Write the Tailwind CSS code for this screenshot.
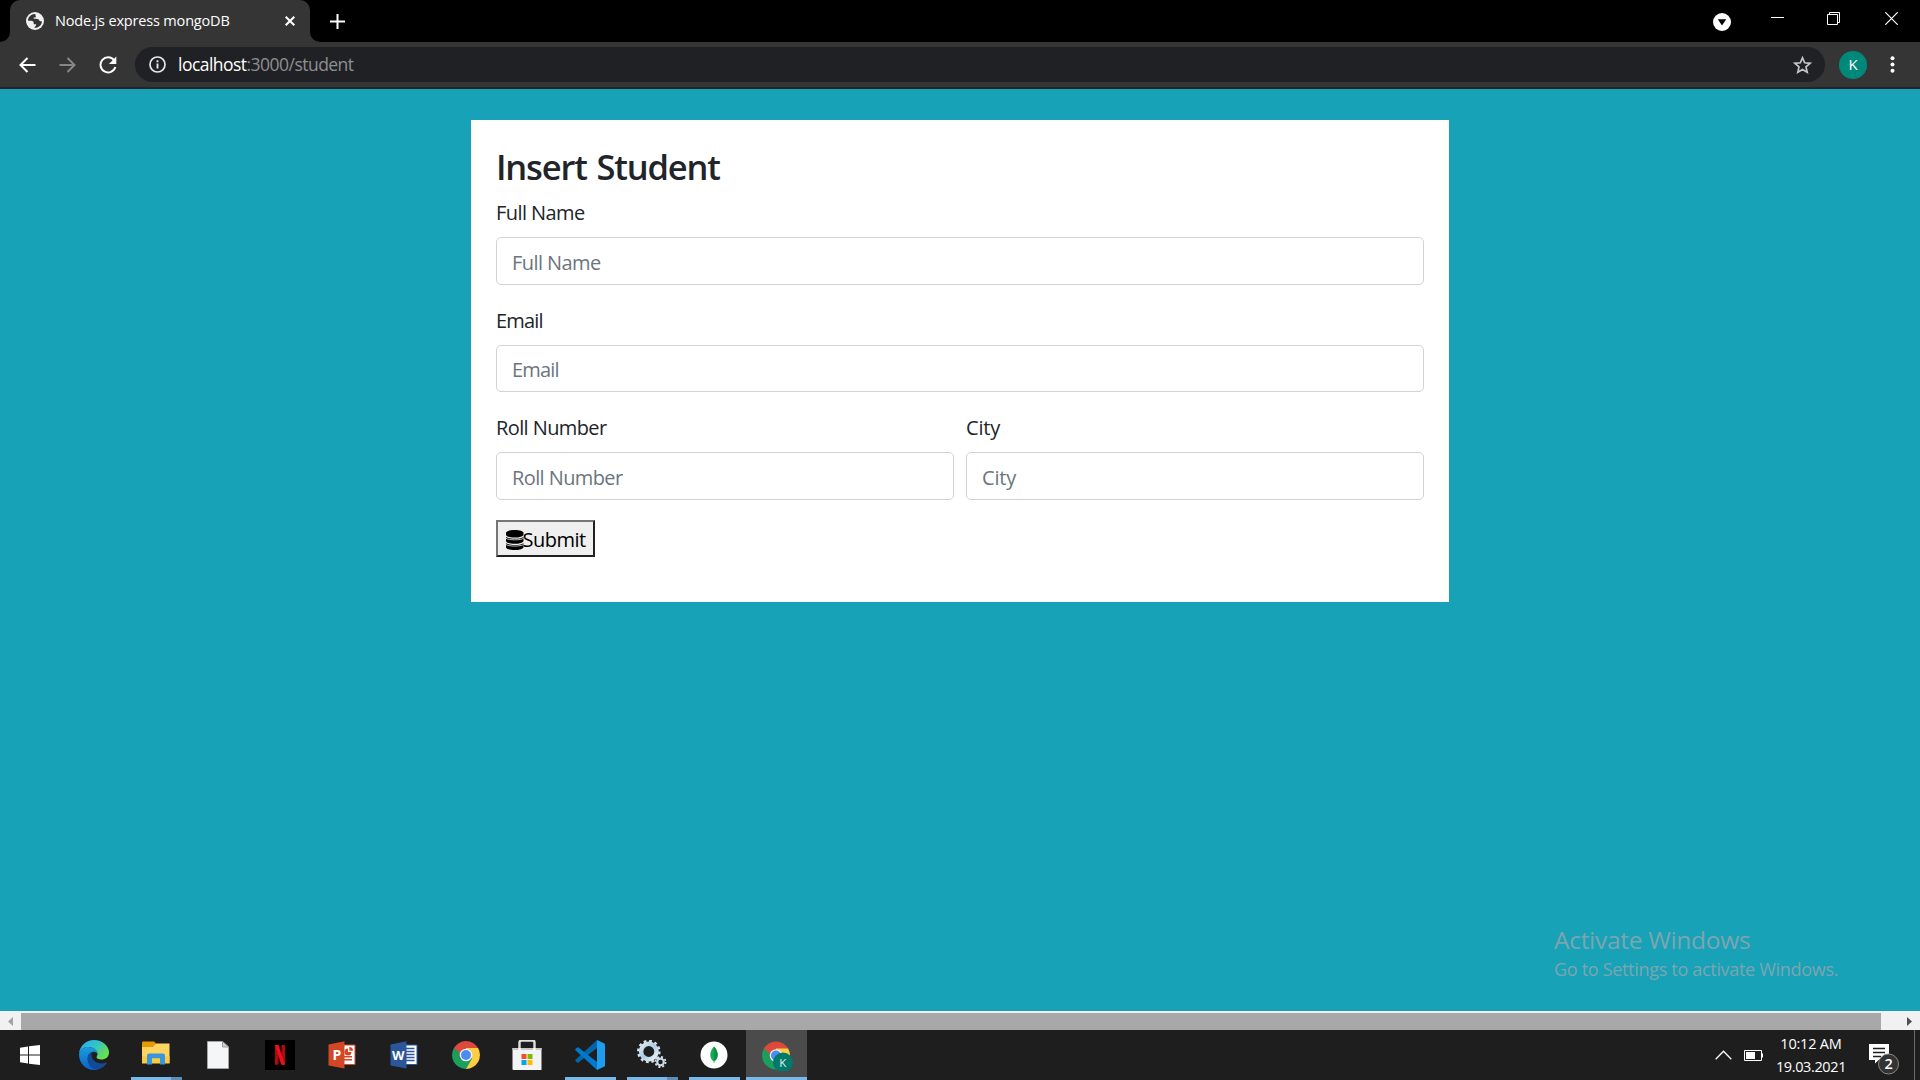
<!DOCTYPE html>
<html lang="en">
<head>
<meta charset="utf-8">
<title>Node.js express mongoDB</title>
<script src="https://cdn.jsdelivr.net/npm/@tailwindcss/browser@4"></script>
</head>
<body class="flex h-[1080px] w-[1920px] flex-col overflow-hidden bg-[#17a2b8] font-['Open_Sans','Noto_Sans',sans-serif]">

<!-- Tab strip -->
<header class="flex h-[42px] shrink-0 bg-black pl-[10px] text-white">
  <div class="relative flex w-[300px] items-center rounded-t-[10px] bg-[#353535] pl-4 pr-[15px]">
    <svg class="absolute -left-[10px] bottom-0" width="10" height="10"><path d="M10 0v10H0A10 10 0 0 0 10 0Z" fill="#353535"/></svg>
    <svg class="absolute -right-[10px] bottom-0" width="10" height="10"><path d="M0 0v10h10A10 10 0 0 1 0 0Z" fill="#353535"/></svg>
    <svg width="18" height="18" viewBox="0 0 18 18"><circle cx="9" cy="9" r="9" fill="#f1f1f1"/><path d="M9.300 2C5.600 1.600 2 4.700 2 8.700l3.200.1c1.700 0 2.500.9 2.500 2.300v1.200h2.500c0 1.500-.9 2.200-2 3.500 4 .3 7.500-2.500 7.800-6.400l-2.400-.5c-.7-1.600-1.700-2-3.600-2.100H7.700V5.600h1.100c.8 0 1-.5 1-1.100z" fill="#353535"/></svg>
    <span class="ml-[11px] whitespace-nowrap text-[14.500px] leading-none tracking-[-0.170px]">Node.js express mongoDB</span>
    <svg class="ml-auto" width="10" height="10" viewBox="0 0 10 10"><path d="M.7.7l8.600 8.600M9.300.7L.7 9.300" stroke="#fff" stroke-width="2"/></svg>
  </div>
  <svg class="ml-5 mt-[14px]" width="15" height="15" viewBox="0 0 15 15"><path d="M7.500 0v15M0 7.500h15" stroke="#fff" stroke-width="2"/></svg>
  <div class="ml-auto flex pr-[22px]">
    <svg class="mr-[40px] mt-[13px]" width="18" height="18" viewBox="0 0 18 18"><circle cx="9" cy="9" r="9" fill="#fff"/><path d="M4.800 6.300h8.400L9 12.500z" fill="#000"/></svg>
    <svg class="mr-[43px] mt-[16px]" width="13" height="3"><path d="M0 1.500h13" stroke="#fff"/></svg>
    <svg class="mr-[45px] mt-[12px]" width="13" height="13" viewBox="0 0 13 13"><path d="M.5 2.500h10v10H.5zM2.500 2.500v-2h10v10h-2" fill="none" stroke="#fff"/></svg>
    <svg class="mt-[12px]" width="13" height="13" viewBox="0 0 13 13"><path d="M.3.3l12.400 12.400M12.700.3L.3 12.700" stroke="#fff" stroke-width="1.200"/></svg>
  </div>
</header>

<!-- Toolbar -->
<nav class="flex h-[47px] shrink-0 items-center border-b-2 border-[#252525] bg-[#353535] pl-[19px]">
  <svg width="17" height="16" viewBox="0 0 17 16"><path d="M16.500 8H2M8.500 1L1.500 8l7 7" fill="none" stroke="#fff" stroke-width="2"/></svg>
  <svg class="ml-[23px]" width="17" height="16" viewBox="0 0 17 16"><path d="M.5 8H15M8.500 1l7 7-7 7" fill="none" stroke="#868686" stroke-width="2"/></svg>
  <svg class="ml-[23px]" width="18" height="18" viewBox="0 0 18 18"><path d="M15.200 4.200A7.600 7.600 0 1 0 16.400 11" fill="none" stroke="#fff" stroke-width="2"/><path d="M17.300.6v7.500H9.900z" fill="#fff"/></svg>
  <div class="ml-[18px] flex h-[35px] w-[1690px] items-center rounded-full bg-[#202124] pl-[14px] pr-[13px]">
    <svg width="17" height="17" viewBox="0 0 17 17"><circle cx="8.500" cy="8.500" r="7.500" fill="none" stroke="#e8e8e8" stroke-width="1.700"/><path d="M8.500 7.500v5M8.500 4.300v2" stroke="#e8e8e8" stroke-width="1.900"/></svg>
    <span class="ml-[12px] whitespace-nowrap text-[17.500px] leading-none tracking-[-0.530px] text-[#8e8f91]"><span class="text-white">localhost</span>:3000/student</span>
    <svg class="ml-auto" width="19" height="18" viewBox="0 0 19 18"><path d="M9.500 1.800l2.200 5 5.400.5-4.100 3.600 1.200 5.300-4.700-2.800-4.700 2.800 1.200-5.300-4.100-3.600 5.400-.5z" fill="none" stroke="#c4c5c7" stroke-width="1.700"/></svg>
  </div>
  <div class="ml-[14px] flex size-7 items-center justify-center rounded-full bg-[#00897b] text-[15px] text-white">K</div>
  <svg class="ml-[23px]" width="5" height="17" viewBox="0 0 5 17"><g fill="#fff"><circle cx="2.500" cy="2.200" r="2"/><circle cx="2.500" cy="8.500" r="2"/><circle cx="2.500" cy="14.800" r="2"/></g></svg>
</nav>

<!-- Page -->
<main class="relative grow pt-[31px] text-[20px] text-[#212529]">
  <form class="mx-auto h-[482px] w-[978px] bg-white px-[25px] pt-[26px]">
    <h3 class="text-[34.500px] font-semibold leading-[42px] tracking-[-1.170px] [word-spacing:2px]">Insert Student</h3>
    <label class="mt-[10px] block leading-[30px] tracking-[-0.570px]">Full Name</label>
    <input class="mt-[9px] block h-12 w-full rounded-[5px] border border-[#ced4da] px-[15px] pt-[3px] tracking-[-0.570px] placeholder:text-[#6c757d]" placeholder="Full Name">
    <label class="mt-[21px] block leading-[30px] tracking-[-0.800px]">Email</label>
    <input class="mt-[9px] block h-[47px] w-full rounded-[5px] border border-[#ced4da] px-[15px] pt-[2px] tracking-[-0.800px] placeholder:text-[#6c757d]" placeholder="Email">
    <div class="mt-[21px] grid grid-cols-2 gap-3">
      <div>
        <label class="block leading-[30px] tracking-[-0.600px]">Roll Number</label>
        <input class="mt-[9px] block h-12 w-full rounded-[5px] border border-[#ced4da] px-[15px] pt-[3px] tracking-[-0.600px] placeholder:text-[#6c757d]" placeholder="Roll Number">
      </div>
      <div>
        <label class="block leading-[30px] tracking-[-0.200px]">City</label>
        <input class="mt-[9px] block h-12 w-full rounded-[5px] border border-[#ced4da] px-[15px] pt-[3px] tracking-[-0.200px] placeholder:text-[#6c757d]" placeholder="City">
      </div>
    </div>
    <button type="button" class="mt-5 flex h-[37px] w-[99px] items-center border-2 border-b-[#212121] border-l-[#767676] border-r-[#212121] border-t-[#767676] bg-[#efefef] pl-[8px] text-black">
      <svg class="mt-[3px] shrink-0" width="17.500" height="20" viewBox="0 0 448 512" preserveAspectRatio="none"><path d="M448 73.100v45.800C448 159.100 347.700 192 224 192S0 159.100 0 118.900V73.100C0 32.900 100.300 0 224 0s224 32.900 224 73.100zM448 176v102.900C448 319.100 347.700 352 224 352S0 319.100 0 278.900V176c48.100 33.100 136.200 48.600 224 48.600S399.900 209.100 448 176zm0 160v102.900c0 40.200-100.300 73.100-224 73.100S0 479.100 0 438.900V336c48.100 33.100 136.200 48.600 224 48.600S399.900 369.100 448 336z"/><path d="M0 210c60 55 388 55 448 0M0 370c60 55 388 55 448 0" fill="none" stroke="#efefef" stroke-width="20"/></svg>
      <span class="-ml-px mt-[2px] tracking-[-0.500px]">Submit</span>
    </button>
  </form>
  <aside class="absolute left-[1554px] top-[833px] whitespace-nowrap text-[#7da5ae]">
    <p class="text-[24.500px] leading-[36px] tracking-[-0.300px]">Activate Windows</p>
    <p class="text-[18px] leading-[23px] tracking-[-0.310px]">Go to Settings to activate Windows.</p>
  </aside>
</main>

<!-- Horizontal scrollbar -->
<div class="flex h-[19px] shrink-0 items-center justify-between border-t-2 border-[#f1f1f1] bg-[#f1f1f1]">
  <svg class="ml-2" width="5" height="9"><path d="M5 0v9L0 4.500z" fill="#a3a3a3"/></svg>
  <div class="ml-2 h-full w-[1860px] bg-[#a8a8a8]"></div>
  <div class="flex w-[39px] justify-end pr-2"><svg width="5" height="9"><path d="M0 0v9l5-4.500z" fill="#505050"/></svg></div>
</div>

<!-- Taskbar -->
<footer class="flex h-[50px] shrink-0 bg-[#1e1e1e]">
  <div class="flex w-[63px] items-center pl-5">
    <svg width="20" height="20" viewBox="0 0 20 20" fill="#fff"><path d="M0 2.700l8-1.200v8H0zM9 1.300L20 0v9.500H9zM0 10.500h8v8l-8-1.200zM9 10.500h11V20L9 18.700z"/></svg>
  </div>
  <!-- Edge -->
  <div class="flex w-[62px] items-center justify-center">
    <svg width="30" height="30" viewBox="0 0 30 30">
      <defs>
        <linearGradient id="e1" x1="0" y1="0" x2="1" y2=".6"><stop offset="0" stop-color="#2fa8ec"/><stop offset=".5" stop-color="#2ec3cf"/><stop offset="1" stop-color="#6be04a"/></linearGradient>
        <linearGradient id="e2" x1="0" y1="0" x2="0" y2="1"><stop offset="0" stop-color="#1b9de2"/><stop offset="1" stop-color="#0a62c0"/></linearGradient>
      </defs>
      <path d="M0 14C.6 6 7 0 15 0c8.500 0 15 6 15 12.500 0 4.500-3.500 7-7.500 7-3.300 0-5-1-5-2.200 0-.8 1-1.300 1-3.300C18.500 10 14 7 9 7c-4 0-7.500 2.500-9 7z" fill="url(#e1)"/>
      <path d="M0 14C1.500 9.500 5 7 9 7c5 0 9.500 3 9.500 7-1-1.800-2.500-2.300-3.700-2.300-4 0-5.800 3.500-5.800 7C9 24 13 29 19 29.400 9 32 0 25 0 14z" fill="url(#e2)"/>
      <path d="M12.500 12.300C9 14 8 17 8.500 20.500 9.500 26 14 30 19 29.400c4-.9 7-3.400 8.700-6.200.4-.7-.2-1-.7-.7-6 2.500-14-.5-14.500-7 0-1.200 0-2.300.9-3.600z" fill="#124a98"/>
    </svg>
  </div>
  <!-- File explorer -->
  <div class="relative flex w-[62px] items-center justify-center">
    <svg class="-mt-1" width="28" height="24" viewBox="0 0 28 24"><path d="M0 1.500Q0 .5 1 .5h11l2 2v5H0z" fill="#e59a00"/><path d="M0 6h11l3-3.500h13.500V22H0z" fill="#ffd460"/><path d="M0 15h27.500v7.500H0z" fill="#fbca45"/><path d="M5 23.500v-9Q5 12.500 7 12.500h14q2 0 2 2v9h-5v-6.300h-8v6.300z" fill="#3896de"/></svg>
    <div class="absolute bottom-0 left-[6px] flex h-[3px] w-[51px] bg-[#76b9ed]"><div class="ml-auto w-[11px] bg-[#5b8fb9]"></div></div>
  </div>
  <!-- Blank document -->
  <div class="flex w-[62px] items-center justify-center">
    <svg width="22" height="28" viewBox="0 0 22 28"><path d="M.5.5h15L21.500 6v21.500H.5z" fill="#f5f6f7" stroke="#a5a5a5"/><path d="M15.500.5V6h6z" fill="#d4d4d4" stroke="#999"/></svg>
  </div>
  <!-- Netflix -->
  <div class="flex w-[62px] items-center justify-center">
    <svg width="30" height="30" viewBox="0 0 30 30"><path d="M0 0h30v30H0z" fill="#000"/><path d="M10 5h3.500v19.500L10 25zM16.500 5H20v20l-3.500-.5z" fill="#b00710"/><path d="M10 5h3.500L20 25l-3.800-.5z" fill="#ee1019"/></svg>
  </div>
  <!-- PowerPoint -->
  <div class="flex w-[62px] items-center justify-center">
    <svg class="-ml-px" width="28" height="28" viewBox="0 0 28 28"><path d="M14 4h13v19.500H14z" fill="#fff" stroke="#d24726"/><path d="M16 15h8v1.500h-8zM16 18h8v1.500h-8z" fill="#d24726"/><path d="M20 7.500a3.500 3.500 0 1 0 3.500 3.500H20z" fill="#d24726"/><path d="M21.300 6v3.700H25A3.700 3.700 0 0 0 21.300 6z" fill="#d24726"/><path d="M.5 3.500L16.500.3v27.200l-16-3z" fill="#d24726"/><text x="4.500" y="19" font-size="14" font-weight="700" fill="#fff">P</text></svg>
  </div>
  <!-- Word -->
  <div class="flex w-[62px] items-center justify-center">
    <svg width="28" height="28" viewBox="0 0 28 28"><path d="M14 4h13v19.500H14z" fill="#fff" stroke="#2b579a"/><path d="M16 7.500h8.500M16 10.500h8.500M16 13.500h8.500M16 16.500h8.500M16 19.500h8.500" stroke="#2b579a" stroke-width="1.300"/><path d="M.5 3.500L16.500.3v27.200l-16-3z" fill="#2b579a"/><text x="2" y="19" font-size="13" font-weight="700" textLength="12.500" lengthAdjust="spacingAndGlyphs" fill="#fff">W</text></svg>
  </div>
  <!-- Chrome -->
  <div class="flex w-[62px] items-center justify-center">
    <svg width="28" height="28" viewBox="0 0 28 28">
      <g id="chrome"><path d="M14 14L1.900 7A14 14 0 0 1 26.100 7z" fill="#dc4a3d"/><path d="M14 14V7h12.100A14 14 0 0 1 14 28z" fill="#ffcd42"/><path d="M1.900 7A14 14 0 0 0 14 28l6.100-10.500L14 14l-6.100 3.500z" fill="#1a9f5e"/><path d="M1.900 7l6 10.500L14 14V7z" fill="#dc4a3d"/><path d="M1.900 7L7.900 17.500 8 12z" fill="#1a9f5e"/><circle cx="14" cy="14" r="6.300" fill="#f1f1f1"/><circle cx="14" cy="14" r="5" fill="#4c8bf5"/></g>
    </svg>
  </div>
  <!-- Microsoft Store -->
  <div class="flex w-[62px] items-center justify-center">
    <svg class="-ml-[2px]" width="30" height="30" viewBox="0 0 30 30"><path d="M7.500 10V2.500q0-2 2-2h11q2 0 2 2V10" fill="none" stroke="#e0e0e0" stroke-width="2.400"/><path d="M.5 8h29v22H1.500q-1 0-1-1z" fill="#f3f3f3"/><path d="M.5 8h29v2H.5z" fill="#c9c9c9"/><path d="M6.500 8h2.300v2.500H6.500zM21.300 8h2.300v2.500h-2.300z" fill="#fff"/><path d="M9.500 14h5v5h-5z" fill="#f25022"/><path d="M15.500 14h5v5h-5z" fill="#7fba00"/><path d="M9.500 20h5v5h-5z" fill="#00a4ef"/><path d="M15.500 20h5v5h-5z" fill="#ffb900"/></svg>
  </div>
  <!-- VS Code -->
  <div class="relative flex w-[62px] items-center justify-center">
    <svg width="30" height="30" viewBox="0 0 30 30"><path d="M.7 19.500L22 0v8L3.500 22.500q-.7.500-1.300 0L.5 21q-.6-.8.2-1.500z" fill="#0065a9"/><path d="M.7 10.500L22 30v-8L3.500 7.500q-.7-.5-1.300 0L.5 9q-.6.800.2 1.500z" fill="#007acc"/><path d="M22 0l7 3.200q1 .5 1 1.500v20.600q0 1-1 1.500L22 30z" fill="#1f9cf0"/></svg>
    <div class="absolute bottom-0 left-[6px] h-[3px] w-[51px] bg-[#76b9ed]"></div>
  </div>
  <!-- Services -->
  <div class="relative flex w-[62px] items-center justify-center">
    <svg class="-ml-px" width="30" height="30" viewBox="0 0 30 30"><defs><linearGradient id="g1" x1="0" y1="0" x2="1" y2="1"><stop offset="0" stop-color="#dfe8ef"/><stop offset=".5" stop-color="#a9cde4"/><stop offset="1" stop-color="#eef4f8"/></linearGradient></defs>
      <circle cx="11.800" cy="11.500" r="7.700" fill="none" stroke="url(#g1)" stroke-width="4.500"/><circle cx="11.800" cy="11.500" r="10.600" fill="none" stroke="#d4e1ea" stroke-width="2.400" stroke-dasharray="2.800 2.750"/>
      <circle cx="23.500" cy="22" r="3.300" fill="none" stroke="#c9dce9" stroke-width="2.200"/><circle cx="23.500" cy="22" r="5.100" fill="none" stroke="#d8e4ec" stroke-width="1.700" stroke-dasharray="2 2"/></svg>
    <div class="absolute bottom-0 left-[6px] flex h-[3px] w-[51px] bg-[#76b9ed]"><div class="ml-auto w-[11px] bg-[#5b8fb9]"></div></div>
  </div>
  <!-- MongoDB Compass -->
  <div class="relative flex w-[62px] items-center justify-center">
    <svg width="28" height="28" viewBox="0 0 28 28"><circle cx="14" cy="14" r="13.500" fill="#fff"/><path d="M14 5.500c-5 5.500-4.800 11.500-.3 15V22h.6v-1.500c4.500-3.500 4.700-9.500-.3-15z" fill="#13aa52"/><path d="M14 5.500c5 5.500 4.800 11.500.3 15z" fill="#0e8f45"/></svg>
    <div class="absolute bottom-0 left-[6px] h-[3px] w-[51px] bg-[#76b9ed]"></div>
  </div>
  <!-- Chrome, active window -->
  <div class="relative ml-px flex w-[61px] items-center justify-center bg-[#4b4b4b]">
    <svg class="ml-[2px]" width="31" height="31" viewBox="0 -1.500 31 31"><use href="#chrome"/><circle cx="21" cy="21" r="10" fill="#00796b"/><text x="17.300" y="25.300" font-size="11.500" fill="#e3efee">K</text></svg>
    <div class="absolute bottom-0 left-0 h-[3px] w-full bg-[#76b9ed]"></div>
  </div>

  <!-- System tray -->
  <div class="ml-auto flex items-center text-white">
    <svg class="mr-[12px]" width="17" height="10" viewBox="0 0 17 10"><path d="M.7 9.200l7.800-8 7.800 8" fill="none" stroke="#fff" stroke-width="1.300"/></svg>
    <svg class="mr-px mt-[1px]" width="19" height="11" viewBox="0 0 19 11"><path d="M.5.500h17v10H.5z" fill="none" stroke="#fff"/><path d="M2 2h9v7H2zM18 3.500h1v4h-1z" fill="#fff"/></svg>
    <div class="flex w-[94px] flex-col items-center whitespace-nowrap text-[14.500px] leading-[23px] tracking-[-0.380px]"><span class="tracking-[-0.200px]">10:12 AM</span><span>19.03.2021</span></div>
    <svg class="ml-[11px] mr-[14px] mt-[7px]" width="31" height="32" viewBox="0 0 31 32"><path d="M0 1h20v16H9.500L6 20.500V17H0z" fill="#fff"/><path d="M4 5.500h12M4 9.500h12M4 13.500h8" stroke="#1e1e1e" stroke-width="1.300"/><circle cx="19.500" cy="21" r="10" fill="#333" stroke="#888"/><text x="15.400" y="26" font-size="14.500" font-weight="600" fill="#fff">2</text></svg>
    <div class="mr-[5px] h-full w-px bg-[#6a6a6a]"></div>
  </div>
</footer>
</body>
</html>
